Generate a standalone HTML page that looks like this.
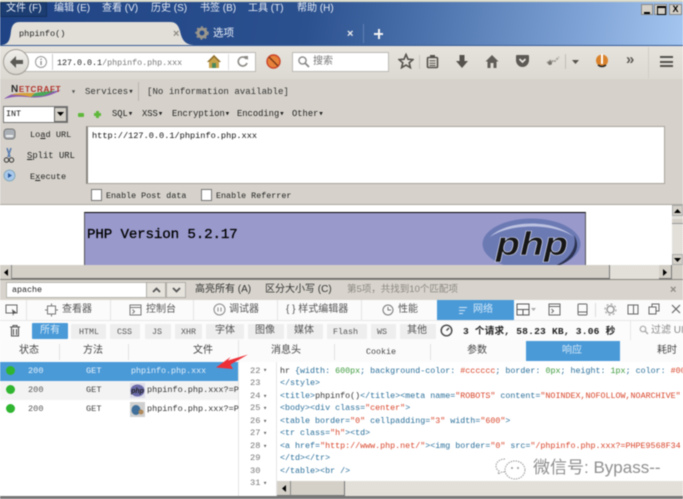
<!DOCTYPE html>
<html lang="zh"><head><meta charset="utf-8"><title>phpinfo()</title>
<style>
html,body{margin:0;padding:0;background:#fff}
#p{position:relative;width:683px;height:499px;overflow:hidden;background:#fff;font:8.35px "Liberation Mono","Noto Sans CJK SC",monospace;color:#222;filter:blur(.4px)}
#p div,#p span.a,#p svg{position:absolute}
.t{position:absolute;white-space:nowrap;line-height:12px}
.z{font:10.5px/12px "Liberation Sans","Noto Sans CJK SC",sans-serif;color:#444}
.m{color:#666}
.c{font:8.35px "Liberation Mono","Noto Sans CJK SC",monospace;white-space:nowrap;position:absolute;line-height:12px;left:280px;color:#2a6f9a}
.n{font:8.7px "Liberation Mono",monospace;position:absolute;left:250px;line-height:12px;color:#777}
.r{color:#d8452a}.k{color:#333}.g{color:#3d9a3d}
.f{background:#eeeeee;height:15px;top:324px;border-radius:1px}
u{text-decoration:underline}
</style></head><body><div id="p">

<!-- title/menu -->
<div style="left:0;top:0;width:683px;height:45px;background:linear-gradient(100deg,#1f4384 0,#2c518f 45%,#4b72ac 62%,#7fa3d6 85%,#a4c6f0 100%)"></div>
<div style="left:0;top:0;width:683px;height:2px;background:#d6d6c4"></div>
<div style="left:0;top:2px;width:47px;height:15px;background:#1c3d72;border:1px solid #14305c;box-sizing:border-box"></div>
<span class="t z" style="left:6px;top:3px;color:#e6ecf6;font-size:10px">文件 (F)</span>
<span class="t z" style="left:54px;top:3px;color:#e6ecf6;font-size:10px">编辑 (E)</span>
<span class="t z" style="left:102px;top:3px;color:#e6ecf6;font-size:10px">查看 (V)</span>
<span class="t z" style="left:151px;top:3px;color:#e6ecf6;font-size:10px">历史 (S)</span>
<span class="t z" style="left:200px;top:3px;color:#e6ecf6;font-size:10px">书签 (B)</span>
<span class="t z" style="left:248px;top:3px;color:#e6ecf6;font-size:10px">工具 (T)</span>
<span class="t z" style="left:297px;top:3px;color:#e6ecf6;font-size:10px">帮助 (H)</span>
<div style="left:641px;top:4px;width:12px;height:11px;background:#d4d0c8;border:1px solid #888;box-sizing:border-box"><div style="left:2px;top:7px;width:6px;height:2px;background:#000"></div></div>
<div style="left:654px;top:4px;width:13px;height:11px;background:#d4d0c8;border:1px solid #888;box-sizing:border-box"><div style="left:2px;top:1px;width:7px;height:6px;border:1px solid #000;border-top-width:2px"></div></div>
<div style="left:669px;top:4px;width:13px;height:11px;background:#d4d0c8;border:1px solid #888;box-sizing:border-box;font:bold 9px/9px 'Liberation Sans';text-align:center;color:#000">X</div>

<!-- tabs -->
<svg style="left:0;top:21px" width="200" height="25"><path d="M0 24C8 24 10 20 11 10C12 3 15 1 20 1H170C175 1 178 3 180 10C182 20 186 24 195 24Z" fill="#e2dfd9"/></svg>
<span class="t" style="left:19px;top:28px;font-size:8.6px;color:#222">phpinfo()</span>
<span class="t" style="left:173px;top:28px;font:bold 11px/12px 'Liberation Sans';color:#8d8a84">×</span>
<svg style="left:195px;top:26px" width="14" height="14"><circle cx="7" cy="7" r="4" fill="none" stroke="#9a968c" stroke-width="3"/><circle cx="7" cy="7" r="6" fill="none" stroke="#9a968c" stroke-width="1.5" stroke-dasharray="2 2.5"/></svg>
<span class="t z" style="left:213px;top:27px;color:#e8eef8;font-size:10.5px">选项</span>
<span class="t" style="left:347px;top:28px;font:bold 11px/12px 'Liberation Sans';color:#f0f0f0">×</span>
<div style="left:363px;top:24px;width:1px;height:19px;background:#5d80b4"></div>
<div style="left:374px;top:33px;width:9px;height:2px;background:#f4f4f4"></div><div style="left:378px;top:29px;width:2px;height:10px;background:#f4f4f4"></div>

<!-- nav bar -->
<div style="left:0;top:45px;width:683px;height:34px;background:linear-gradient(#e6e3dd,#dcd9d2);border-top:1px solid #3a5e96;box-sizing:border-box"></div>
<div style="left:22px;top:52px;width:234px;height:20px;background:#fff;border:1px solid #bdbab4;box-sizing:border-box"></div>
<div style="left:3px;top:49px;width:26px;height:26px;border-radius:50%;background:linear-gradient(#f2f0ec,#d8d5ce);border:1px solid #a09d97;box-sizing:border-box"></div>
<svg style="left:9px;top:55px" width="15" height="14"><path d="M7 1L1 7L7 13V9H14V5H7Z" fill="#5c5a55"/></svg>
<svg style="left:34px;top:55px" width="14" height="14"><circle cx="7" cy="7" r="5.5" fill="none" stroke="#999"/><rect x="6.4" y="6" width="1.3" height="4" fill="#888"/><rect x="6.4" y="3.6" width="1.3" height="1.3" fill="#888"/></svg>
<div style="left:52px;top:54px;width:1px;height:16px;background:#ccc"></div>
<span class="t" style="left:57px;top:57px"><span style="color:#222">127.0.0.1</span><span style="color:#777">/phpinfo.php.xxx</span></span>
<svg style="left:206px;top:54px" width="16" height="15"><path d="M8 1L1 8H3V14H13V8H15Z" fill="#c8a24a"/><path d="M8 1L1 8H3L8 3L13 8H15Z" fill="#8a6a2a"/><rect x="6" y="9" width="4" height="5" fill="#4f8a5a"/></svg>
<div style="left:228px;top:54px;width:1px;height:16px;background:#ddd"></div>
<svg style="left:236px;top:55px" width="13" height="13"><path d="M10.5 4A4.5 4.5 0 1 0 11 8" fill="none" stroke="#8c8a85" stroke-width="1.6"/><path d="M8 1L12 1L12 5Z" fill="#8c8a85"/></svg>
<svg style="left:266px;top:54px" width="15" height="15"><circle cx="7.5" cy="7.5" r="6.5" fill="#e8823a" stroke="#c9452a" stroke-width="1.4"/><path d="M3 3L12 12" stroke="#7a3a1a" stroke-width="1.4"/></svg>
<div style="left:292px;top:52px;width:97px;height:20px;background:#fff;border:1px solid #bdbab4;box-sizing:border-box"></div>
<svg style="left:297px;top:55px" width="13" height="13"><circle cx="5.5" cy="5.5" r="3.6" fill="none" stroke="#888" stroke-width="1.4"/><path d="M8 8L12 12" stroke="#888" stroke-width="1.8"/></svg>
<span class="t z" style="left:313px;top:56px;font-size:10px;color:#777">搜索</span>
<svg style="left:398px;top:53px" width="16" height="16"><path d="M8 1.5L10 6.2L15 6.6L11.2 9.8L12.4 14.7L8 12.1L3.6 14.7L4.8 9.8L1 6.6L6 6.2Z" fill="none" stroke="#55524d" stroke-width="1.6"/></svg>
<div style="left:419px;top:55px;width:1px;height:14px;background:#c8c5be"></div>
<svg style="left:426px;top:54px" width="13" height="15"><rect x="1.5" y="3.5" width="10" height="10" rx="1" fill="none" stroke="#55524d" stroke-width="1.6"/><rect x="4" y="1" width="5" height="3" fill="#55524d"/><path d="M3.5 6.8H9.5M3.5 9.3H9.5M3.5 11.5H9.5" stroke="#55524d"/></svg>
<svg style="left:455px;top:54px" width="14" height="15"><path d="M4.5 1H9.5V7H13L7 14L1 7H4.5Z" fill="#55524d"/></svg>
<svg style="left:485px;top:54px" width="14" height="15"><path d="M7 1L0.5 7.5H2.5V14H5.5V9H8.5V14H11.5V7.5H13.5Z" fill="#605d58"/></svg>
<svg style="left:515px;top:54px" width="15" height="14"><path d="M1 2Q1 1 2 1H13Q14 1 14 2V6C14 10 11 13 7.5 13C4 13 1 10 1 6Z" fill="#5c5954"/><path d="M4.5 5L7.5 8L10.5 5" fill="none" stroke="#e8e6e0" stroke-width="1.8"/></svg>
<svg style="left:546px;top:56px" width="14" height="11"><path d="M1 7L5 4L8 6L13 1" fill="none" stroke="#a5a29c" stroke-width="2" stroke-dasharray="2 1"/><circle cx="4" cy="7" r="2" fill="#77746e"/></svg>
<div style="left:565px;top:54px;width:1px;height:15px;background:#c0bdb6"></div>
<svg style="left:572px;top:60px" width="7" height="4"><path d="M0 0H7L3.5 4Z" fill="#55524d"/></svg>
<svg style="left:595px;top:53px" width="14" height="16"><ellipse cx="7" cy="7.5" rx="6" ry="6" fill="#d9822b"/><rect x="6" y="1" width="2" height="10" fill="#fff"/><path d="M3 12Q7 15 11 12" stroke="#222" stroke-width="1.5" fill="none"/></svg>
<span class="t" style="left:626px;top:54px;font:bold 15px/12px 'Liberation Sans';color:#5c5954">»</span>
<div style="left:648px;top:47px;width:1px;height:31px;background:#d0cdc6"></div>
<div style="left:660px;top:56px;width:13px;height:2px;background:#55524d"></div>
<div style="left:660px;top:61px;width:13px;height:2px;background:#55524d"></div>
<div style="left:660px;top:65px;width:13px;height:2px;background:#55524d"></div>

<!-- chrome bars -->
<div style="left:0;top:79px;width:683px;height:126px;background:#d6d2cb"></div>
<svg style="left:3px;top:84px" width="62" height="17"><path d="M1 15C8 9 14 9 22 10C32 11 42 9 58 6C44 14 34 14 24 13C14 12 8 13 1 15Z" fill="#8a5ab0"/><path d="M8 11C16 8 24 9 32 9L28 13C20 11 14 11 8 11Z" fill="#d6a13a"/><path d="M32 9C38 8 46 7 52 7L40 12C36 12 32 12 28 13Z" fill="#4aa85a"/></svg>
<span class="t" style="left:11px;top:85px;font:bold 8px/10px 'Liberation Sans';letter-spacing:.7px;color:#2a2a2a"><span style="font-size:10px">N</span><span style="color:#b0322a">ETCRAFT</span></span>
<span class="t m" style="left:71px;top:86px;color:#555">▾</span>
<span class="t" style="left:85px;top:86px;font-size:9px;color:#333">Services▾</span>
<div style="left:138px;top:82px;width:1px;height:19px;background:#b9b5ae"></div>
<span class="t" style="left:147px;top:86px;font-size:9.1px;color:#333">[No information available]</span>

<div style="left:3px;top:106px;width:65px;height:17px;background:#fff;border:1px solid #777;box-sizing:border-box"></div>
<span class="t" style="left:6px;top:108px;color:#111">INT</span>
<div style="left:54px;top:107px;width:13px;height:15px;background:#d4d0c8;border:1px solid #666;box-sizing:border-box"></div>
<svg style="left:57px;top:112px" width="7" height="4"><path d="M0 0H7L3.5 4Z" fill="#000"/></svg>
<div style="left:78px;top:113px;width:6px;height:4px;background:#5fb83c;border-radius:1px"></div>
<div style="left:94px;top:113px;width:7px;height:3px;background:#5fb83c"></div><div style="left:96px;top:111px;width:3px;height:7px;background:#5fb83c"></div>
<span class="t" style="left:112px;top:108px;font-size:8.8px">SQL▾</span>
<span class="t" style="left:142px;top:108px;font-size:8.8px">XSS▾</span>
<span class="t" style="left:172px;top:108px;font-size:8.8px">Encryption▾</span>
<span class="t" style="left:237px;top:108px;font-size:8.8px">Encoding▾</span>
<span class="t" style="left:292px;top:108px;font-size:8.8px">Other▾</span>

<svg style="left:3px;top:127px" width="14" height="14"><rect x="1" y="2" width="11" height="10" rx="3" fill="#aab0b6" stroke="#777"/><rect x="3" y="8" width="7" height="2" fill="#eee"/></svg>
<svg style="left:3px;top:147px" width="12" height="17"><path d="M4 1L7 10M8 1L5 10" stroke="#5d7fb0" stroke-width="1.6"/><circle cx="3.5" cy="13" r="2.2" fill="none" stroke="#333"/><circle cx="8.5" cy="13" r="2.2" fill="none" stroke="#333"/></svg>
<svg style="left:3px;top:169px" width="13" height="13"><circle cx="6.5" cy="6.5" r="5.5" fill="#a9c9ec" stroke="#8ab"/><path d="M5 4L9 6.5L5 9Z" fill="#2a5a9a"/></svg>
<span class="t" style="left:30px;top:129px;font-size:8.6px">Lo<u>a</u>d URL</span>
<span class="t" style="left:27px;top:150px;font-size:8.9px"><u>S</u>plit URL</span>
<span class="t" style="left:30px;top:171px;font-size:8.6px">E<u>x</u>ecute</span>
<div style="left:86px;top:126px;width:579px;height:58px;background:#fff;border:1px solid #a8a49c;border-left:2px solid #8a8680;box-sizing:border-box"></div>
<span class="t" style="left:92px;top:130px;font-size:8.6px;color:#111">http://127.0.0.1/phpinfo.php.xxx</span>
<div style="left:91px;top:189px;width:11px;height:12px;background:#fff;border:1px solid #777;box-sizing:border-box"></div>
<span class="t" style="left:106px;top:190px;font-size:8.4px">Enable Post data</span>
<div style="left:201px;top:189px;width:11px;height:12px;background:#fff;border:1px solid #777;box-sizing:border-box"></div>
<span class="t" style="left:216px;top:190px;font-size:8.4px">Enable Referrer</span>
<div style="left:0;top:204px;width:683px;height:1px;background:#aaa69f"></div>

<!-- page -->
<div style="left:84px;top:212px;width:502px;height:53px;background:#9999cc;border-top:1px solid #000;border-left:1px solid #555;border-right:1px solid #555;box-sizing:border-box"></div>
<span class="t" style="left:87px;top:227px;font:14.2px/16px 'Liberation Mono',monospace;color:#000;letter-spacing:-.15px;-webkit-text-stroke:.3px #000">PHP Version 5.2.17</span>
<svg style="left:482px;top:217px" width="100" height="48"><ellipse cx="49.5" cy="27" rx="49" ry="25.5" fill="#6c7ab4"/><path d="M8 20C22 4 70 0 92 20C72 6 28 6 8 20Z" fill="#bcc2e0"/><path d="M92 18C102 34 86 48 70 50C86 44 96 32 92 18Z" fill="#2c3350"/><text x="14" y="38" font-family="Liberation Sans" font-style="italic" font-weight="bold" font-size="33" fill="#171717" stroke="#d8dcf0" stroke-width=".6" textLength="72" lengthAdjust="spacingAndGlyphs">php</text></svg>

<!-- v scrollbar -->
<div style="left:672px;top:205px;width:11px;height:60px;background:repeating-conic-gradient(#d4d0c8 0 25%,#f2f0ec 0 50%) 0 0/2px 2px"></div>
<div style="left:672px;top:205px;width:11px;height:11px;background:#d4d0c8;border:1px solid #aaa;box-sizing:border-box"></div>
<svg style="left:674px;top:209px" width="7" height="4"><path d="M3.5 0L7 4H0Z" fill="#000"/></svg>
<div style="left:672px;top:219px;width:11px;height:5px;background:#d4d0c8;border-bottom:1px solid #999;box-sizing:border-box"></div>
<div style="left:672px;top:254px;width:11px;height:11px;background:#d4d0c8;border:1px solid #aaa;box-sizing:border-box"></div>
<svg style="left:674px;top:258px" width="7" height="4"><path d="M0 0H7L3.5 4Z" fill="#000"/></svg>
<!-- h scrollbar -->
<div style="left:0;top:265px;width:683px;height:14px;background:repeating-conic-gradient(#d4d0c8 0 25%,#f2f0ec 0 50%) 0 0/2px 2px"></div>
<div style="left:12px;top:265px;width:598px;height:14px;background:#d4d0c8;border-right:1px solid #777;border-bottom:1px solid #666;box-sizing:border-box"></div>
<div style="left:0;top:265px;width:12px;height:14px;background:#d4d0c8;border-right:1px solid #888;box-sizing:border-box"></div>
<svg style="left:4px;top:269px" width="4" height="7"><path d="M4 0V7L0 3.5Z" fill="#000"/></svg>
<div style="left:659px;top:265px;width:13px;height:14px;background:#d4d0c8;border-right:1px solid #777;border-bottom:1px solid #777;box-sizing:border-box"></div>
<svg style="left:663px;top:269px" width="4" height="7"><path d="M0 0V7L4 3.5Z" fill="#000"/></svg>
<div style="left:672px;top:265px;width:11px;height:14px;background:#d4d0c8"></div>

<!-- find bar -->
<div style="left:0;top:279px;width:683px;height:21px;background:#d8d4cd;border-top:1px solid #88857f;box-sizing:border-box"></div>
<div style="left:6px;top:282px;width:180px;height:16px;background:#fff;border:1px solid #b8b5ae;box-sizing:border-box"></div>
<span class="t" style="left:12px;top:284px;color:#222">apache</span>
<div style="left:146px;top:282px;width:20px;height:16px;background:#e6e3dd;border:1px solid #b0ada6;box-sizing:border-box"></div>
<div style="left:166px;top:282px;width:20px;height:16px;background:#e6e3dd;border:1px solid #b0ada6;box-sizing:border-box"></div>
<svg style="left:152px;top:287px" width="9" height="6"><path d="M1 5L4.5 1.5L8 5" fill="none" stroke="#555" stroke-width="1.8"/></svg>
<svg style="left:172px;top:287px" width="9" height="6"><path d="M1 1L4.5 4.5L8 1" fill="none" stroke="#555" stroke-width="1.8"/></svg>
<span class="t z" style="left:195px;top:284px;font-size:10px;color:#333">高亮所有 (A)</span>
<span class="t z" style="left:265px;top:284px;font-size:10px;color:#333">区分大小写 (C)</span>
<span class="t z" style="left:347px;top:284px;font-size:9.5px;color:#8a8780">第5项，共找到10个匹配项</span>
<span class="t" style="left:670px;top:284px;font:bold 11px/12px 'Liberation Sans';color:#8a8780">×</span>

<!-- devtools toolbar -->
<div style="left:0;top:300px;width:683px;height:20px;background:#fbfbfb"></div>
<div style="left:26px;top:300px;width:1px;height:20px;background:#e4e4e4"></div>
<svg style="left:5px;top:304px" width="13" height="12"><rect x="1" y="1" width="11" height="8" fill="none" stroke="#666"/><path d="M7 5L12 9L9 9.5L8 12Z" fill="#555"/></svg>
<svg style="left:45px;top:303px" width="13" height="14"><rect x="2.5" y="3" width="8" height="8" fill="none" stroke="#777"/><path d="M6.5 0.5V3M6.5 11V13.5M0 7H2.5M10.5 7H13" stroke="#777"/></svg>
<span class="t z" style="left:62px;top:304px;font-size:10px;color:#555">查看器</span>
<div style="left:110px;top:300px;width:1px;height:20px;background:#e4e4e4"></div>
<svg style="left:129px;top:304px" width="13" height="12"><rect x="1" y="1" width="11" height="10" fill="none" stroke="#777"/><path d="M1 3.5H12M3.5 5.5L5.5 7.5L3.5 9.5" fill="none" stroke="#777"/></svg>
<span class="t z" style="left:146px;top:304px;font-size:10px;color:#555">控制台</span>
<div style="left:193px;top:300px;width:1px;height:20px;background:#e4e4e4"></div>
<svg style="left:213px;top:303px" width="13" height="13"><circle cx="6.5" cy="6.5" r="5.5" fill="none" stroke="#888"/><path d="M5 4.5V8.5M8 4.5V8.5" stroke="#888"/></svg>
<span class="t z" style="left:229px;top:304px;font-size:10px;color:#555">调试器</span>
<div style="left:277px;top:300px;width:1px;height:20px;background:#e4e4e4"></div>
<span class="t z" style="left:286px;top:304px;font-size:10px;color:#555">{ } 样式编辑器</span>
<div style="left:361px;top:300px;width:1px;height:20px;background:#e4e4e4"></div>
<svg style="left:382px;top:304px" width="12" height="12"><circle cx="6" cy="6" r="5" fill="none" stroke="#777"/><path d="M6 3V6H9" fill="none" stroke="#777"/></svg>
<span class="t z" style="left:398px;top:304px;font-size:10px;color:#555">性能</span>
<div style="left:437px;top:300px;width:77px;height:20px;background:#4a9ad8"></div>
<div style="left:459px;top:307px;width:8px;height:1px;background:#cfe4f6"></div><div style="left:459px;top:310px;width:6px;height:1px;background:#cfe4f6"></div><div style="left:459px;top:313px;width:4px;height:1px;background:#cfe4f6"></div>
<span class="t z" style="left:473px;top:304px;font-size:10px;color:#d6e9f8">网络</span>
<svg style="left:516px;top:303px" width="20" height="13"><rect x="1" y="1" width="12" height="11" fill="none" stroke="#555"/><path d="M1 6.5H13M7 6.5V12" stroke="#555"/><path d="M15 5H20L17.5 8Z" fill="#aaa"/></svg>
<svg style="left:548px;top:303px" width="13" height="13"><rect x="1" y="1" width="11" height="11" fill="none" stroke="#666"/><path d="M1 3.5H12M3.5 6L5.5 8L3.5 10" fill="none" stroke="#666"/></svg>
<svg style="left:577px;top:303px" width="11" height="13"><rect x="1" y="1" width="9" height="11" rx="1" fill="none" stroke="#666"/><path d="M1 9H10" stroke="#666"/></svg>
<div style="left:595px;top:303px;width:1px;height:14px;background:#ddd"></div>
<svg style="left:604px;top:303px" width="13" height="13"><circle cx="6.5" cy="6.5" r="3.5" fill="none" stroke="#999" stroke-width="1.5"/><circle cx="6.5" cy="6.5" r="5.5" fill="none" stroke="#999" stroke-dasharray="2 2.3"/></svg>
<svg style="left:627px;top:304px" width="12" height="11"><rect x="1" y="1" width="10" height="9" fill="none" stroke="#666"/><path d="M6.5 1V10" stroke="#666"/></svg>
<svg style="left:648px;top:303px" width="12" height="12"><rect x="1" y="4" width="7" height="7" fill="none" stroke="#666"/><path d="M4 4V1H11V8H8" fill="none" stroke="#666"/></svg>
<svg style="left:671px;top:304px" width="10" height="10"><path d="M1 1L9 9M9 1L1 9" stroke="#666" stroke-width="1.2"/></svg>

<!-- filter row -->
<div style="left:0;top:320px;width:683px;height:20px;background:#fcfcfc;border-top:1px solid #e8e8e8;box-sizing:border-box"></div>
<svg style="left:9px;top:324px" width="12" height="13"><path d="M1 3H11M4 3V1.5H8V3M2.5 3.5V12H9.5V3.5M4.5 5V11M7.5 5V11" fill="none" stroke="#555" stroke-width="1.1"/></svg>
<div style="left:32px;top:323px;width:36px;height:16px;background:#4a9ad8;border-radius:1px"></div>
<span class="t z" style="left:40px;top:325px;font-size:10px;color:#d6e9f8">所有</span>
<div class="f" style="left:71px;width:35px"></div><span class="t" style="left:79px;top:326px;color:#555">HTML</span>
<div class="f" style="left:110px;width:30px"></div><span class="t" style="left:117px;top:326px;color:#555">CSS</span>
<div class="f" style="left:145px;width:26px"></div><span class="t" style="left:152px;top:326px;color:#555">JS</span>
<div class="f" style="left:175px;width:27px"></div><span class="t" style="left:181px;top:326px;color:#555">XHR</span>
<div class="f" style="left:206px;width:38px"></div><span class="t z" style="left:215px;top:325px;font-size:10px;color:#555">字体</span>
<div class="f" style="left:248px;width:36px"></div><span class="t z" style="left:255px;top:325px;font-size:10px;color:#555">图像</span>
<div class="f" style="left:287px;width:36px"></div><span class="t z" style="left:294px;top:325px;font-size:10px;color:#555">媒体</span>
<div class="f" style="left:327px;width:40px"></div><span class="t" style="left:333px;top:326px;color:#555">Flash</span>
<div class="f" style="left:371px;width:25px"></div><span class="t" style="left:377px;top:326px;color:#555">WS</span>
<div class="f" style="left:400px;width:36px"></div><span class="t z" style="left:407px;top:325px;font-size:10px;color:#555">其他</span>
<svg style="left:440px;top:324px" width="13" height="13"><circle cx="6.5" cy="6.5" r="5.3" fill="none" stroke="#444" stroke-width="1.4"/><path d="M6.5 6.5L9 4" stroke="#444" stroke-width="1.4"/></svg>
<span class="t" style="left:463px;top:326px;font:bold 9.6px/12px 'Liberation Mono','Noto Sans CJK SC',monospace;letter-spacing:.2px;color:#222">3 个请求, 58.23 KB, 3.06 秒</span>
<div style="left:630px;top:320px;width:1px;height:20px;background:#e8e8e8"></div>
<svg style="left:639px;top:325px" width="10" height="10"><circle cx="4" cy="4" r="2.8" fill="none" stroke="#aaa" stroke-width="1.2"/><path d="M6 6L9 9" stroke="#aaa" stroke-width="1.4"/></svg>
<span class="t z" style="left:651px;top:325px;font-size:10px;color:#888">过滤 UI</span>

<!-- table head -->
<div style="left:0;top:340px;width:683px;height:22px;background:#fbfbfb"></div>
<span class="t z" style="left:19px;top:345px;font-size:10px;color:#444">状态</span>
<div style="left:59px;top:344px;width:1px;height:16px;background:#e2e2e2"></div>
<span class="t z" style="left:83px;top:345px;font-size:10px;color:#444">方法</span>
<div style="left:128px;top:344px;width:1px;height:16px;background:#e2e2e2"></div>
<span class="t z" style="left:193px;top:345px;font-size:10px;color:#444">文件</span>
<div style="left:238px;top:340px;width:1px;height:157px;background:#e4e4e4"></div>
<span class="t z" style="left:271px;top:345px;font-size:10px;color:#444">消息头</span>
<div style="left:334px;top:344px;width:1px;height:16px;background:#e2e2e2"></div>
<span class="t" style="left:366px;top:346px;color:#444">Cookie</span>
<div style="left:430px;top:344px;width:1px;height:16px;background:#e2e2e2"></div>
<span class="t z" style="left:467px;top:345px;font-size:10px;color:#444">参数</span>
<div style="left:526px;top:341px;width:94px;height:20px;background:#4a9ad8"></div>
<span class="t z" style="left:562px;top:345px;font-size:10px;color:#d6e9f8">响应</span>
<span class="t z" style="left:657px;top:345px;font-size:10px;color:#444">耗时</span>

<!-- rows -->
<div style="left:0;top:362px;width:238px;height:19px;background:#4a9ad8"></div>
<div style="left:0;top:381px;width:238px;height:19px;background:#f3f3f3"></div>
<div style="left:6px;top:366px;width:9px;height:9px;border-radius:50%;background:#2fb52f"></div>
<div style="left:6px;top:385px;width:9px;height:9px;border-radius:50%;background:#2fb52f"></div>
<div style="left:6px;top:404px;width:9px;height:9px;border-radius:50%;background:#2fb52f"></div>
<span class="t" style="left:28px;top:365px;font-size:8.6px;color:#e8f2fb">200</span>
<span class="t" style="left:28px;top:384px;font-size:8.6px;color:#555">200</span>
<span class="t" style="left:28px;top:403px;font-size:8.6px;color:#555">200</span>
<span class="t" style="left:86px;top:365px;font-size:8.6px;color:#e8f2fb">GET</span>
<span class="t" style="left:86px;top:384px;font-size:8.6px;color:#444">GET</span>
<span class="t" style="left:86px;top:403px;font-size:8.6px;color:#444">GET</span>
<span class="t" style="left:131px;top:365px;color:#e4f0fa">phpinfo.php.xxx</span>
<svg style="left:130px;top:383px" width="15" height="15"><rect width="15" height="15" fill="#dcdcea"/><ellipse cx="7.5" cy="7.5" rx="7" ry="6" fill="#6a6aa8"/><text x="7.5" y="10" text-anchor="middle" font-size="7" font-family="Liberation Sans" font-style="italic" font-weight="bold" fill="#222">php</text></svg>
<span class="t" style="left:147px;top:384px;font-size:8.5px;color:#333">phpinfo.php.xxx?=P</span>
<svg style="left:130px;top:402px" width="15" height="15"><rect width="15" height="15" fill="#cfcfcf"/><ellipse cx="6" cy="8" rx="4.5" ry="5" fill="#3f6f9a"/><circle cx="11" cy="10" r="2.5" fill="#b08a5a"/></svg>
<span class="t" style="left:147px;top:403px;font-size:8.5px;color:#333">phpinfo.php.xxx?=P</span>
<svg style="left:214px;top:353px" width="36" height="20"><path d="M34 1.5L14 7.5L16.5 4L2 14.5L19 16L16.5 11.5Z" fill="#ee2f37"/></svg>

<!-- response -->
<div style="left:276px;top:362px;width:1px;height:134px;background:#e6e6e6"></div>
<span class="n" style="top:365px">22</span><span class="t" style="left:263px;top:365px;font-size:7px;color:#666">▾</span>
<span class="n" style="top:377px">23</span>
<span class="n" style="top:390px">24</span><span class="t" style="left:263px;top:391px;font-size:7px;color:#666">▾</span>
<span class="n" style="top:402px">25</span><span class="t" style="left:263px;top:403px;font-size:7px;color:#666">▾</span>
<span class="n" style="top:415px">26</span><span class="t" style="left:263px;top:416px;font-size:7px;color:#666">▾</span>
<span class="n" style="top:427px">27</span><span class="t" style="left:263px;top:428px;font-size:7px;color:#666">▾</span>
<span class="n" style="top:440px">28</span><span class="t" style="left:263px;top:441px;font-size:7px;color:#666">▾</span>
<span class="n" style="top:452px">29</span>
<span class="n" style="top:465px">30</span>
<span class="n" style="top:477px">31</span><span class="t" style="left:263px;top:478px;font-size:7px;color:#666">▾</span>

<div class="c" style="top:365px"><span class="k">hr</span> {width: <span class="g">600px</span>; background-color: <span class="r">#cccccc</span>; border: <span class="g">0px</span>; height: <span class="g">1px</span>; color: <span class="r">#000000;</span></div>
<div class="c" style="top:377px">&lt;/style&gt;</div>
<div class="c" style="top:390px">&lt;title&gt;<span class="k">phpinfo()</span>&lt;/title&gt;&lt;meta name=<span class="r">"ROBOTS"</span> content=<span class="r">"NOINDEX,NOFOLLOW,NOARCHIVE"</span></div>
<div class="c" style="top:402px">&lt;body&gt;&lt;div class=<span class="r">"center"</span>&gt;</div>
<div class="c" style="top:415px">&lt;table border=<span class="r">"0"</span> cellpadding=<span class="r">"3"</span> width=<span class="r">"600"</span>&gt;</div>
<div class="c" style="top:427px">&lt;tr class=<span class="r">"h"</span>&gt;&lt;td&gt;</div>
<div class="c" style="top:440px">&lt;a href=<span class="r">"http://www.php.net/"</span>&gt;&lt;img border=<span class="r">"0"</span> src=<span class="r">"/phpinfo.php.xxx?=PHPE9568F34</span></div>
<div class="c" style="top:452px">&lt;/td&gt;&lt;/tr&gt;</div>
<div class="c" style="top:465px">&lt;/table&gt;&lt;br /&gt;</div>

<!-- right h scrollbar -->
<div style="left:277px;top:481px;width:406px;height:15px;background:repeating-conic-gradient(#d4d0c8 0 25%,#f2f0ec 0 50%) 0 0/2px 2px"></div>
<div style="left:277px;top:481px;width:14px;height:15px;background:#d4d0c8;border-right:1px solid #888;border-bottom:1px solid #777;box-sizing:border-box"></div>
<svg style="left:282px;top:485px" width="4" height="7"><path d="M4 0V7L0 3.5Z" fill="#000"/></svg>
<div style="left:291px;top:481px;width:54px;height:15px;background:#d4d0c8;border-right:1px solid #777;border-bottom:1px solid #777;box-sizing:border-box"></div>
<div style="left:0;top:496px;width:683px;height:3px;background:#777"></div>

<!-- watermark -->
<svg style="left:495px;top:455px" width="36" height="28"><path d="M10 4C5 4 1 7 1 11C1 13 2 15 4 16L3 19L7 17C8 17 9 17 10 17" fill="none" stroke="#999" stroke-dasharray="1.5 1"/><ellipse cx="20" cy="15" rx="10" ry="9" fill="#fff" fill-opacity=".6" stroke="#999" stroke-dasharray="1.5 1"/><circle cx="17" cy="13" r="1" fill="#999"/><circle cx="23" cy="13" r="1" fill="#999"/></svg>
<span class="t" style="left:533px;top:456px;font:17px/24px 'Liberation Sans','Noto Sans CJK SC',sans-serif;color:#8f8f8f;white-space:nowrap">微信号: Bypass--</span>
</div></body></html>
